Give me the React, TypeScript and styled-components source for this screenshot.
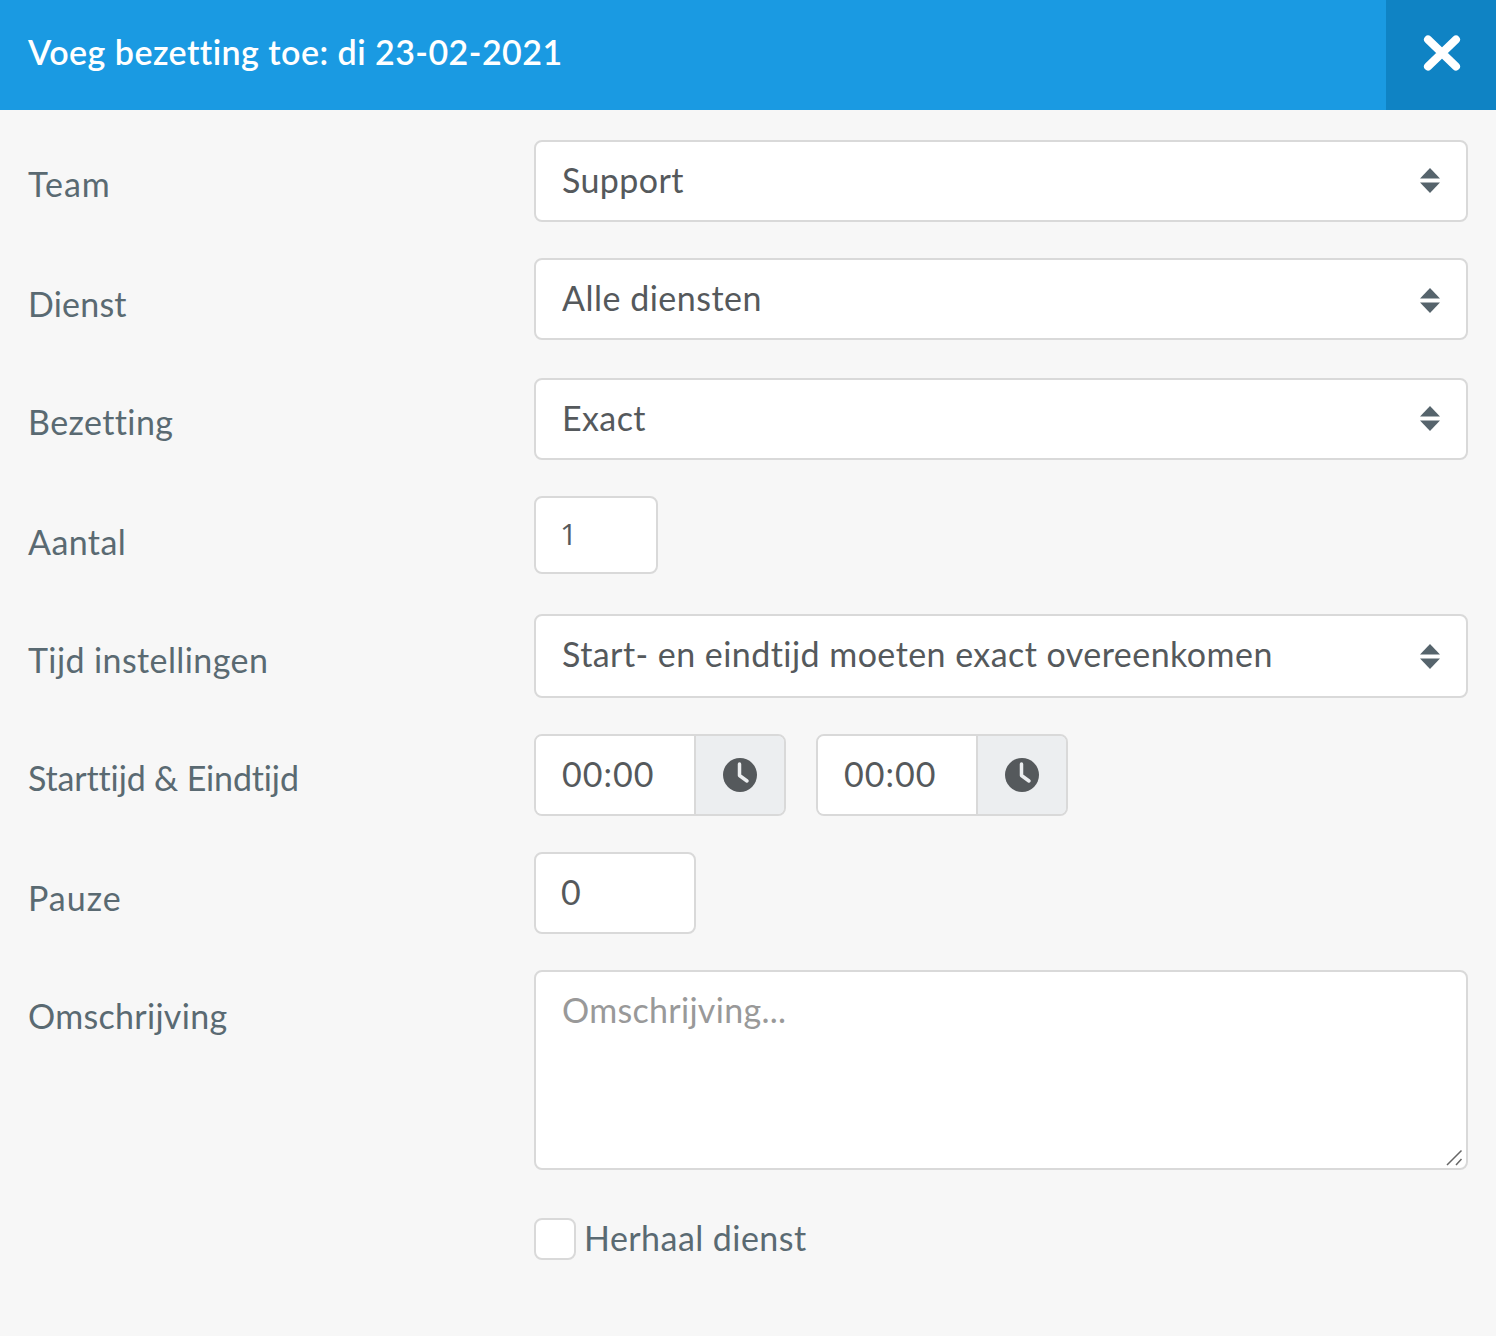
import React from "react";
import styled, { createGlobalStyle } from "styled-components";

const GlobalStyle = createGlobalStyle`
  * {
    box-sizing: border-box;
  }
  html, body {
    margin: 0;
    padding: 0;
    background: #f7f7f7;
    font-family: Lato, "Open Sans", sans-serif;
    font-variant-ligatures: none;
  }
  input, select, textarea {
    font-variant-ligatures: none;
  }
`;

const Field = ({ label, gap, offset, spacing = 0.4, children }: { label: string; gap: number; offset: number; spacing?: number; children: React.ReactNode }) => (
  <Row $gap={gap}>
    <Label $offset={offset} $spacing={spacing}>{label}</Label>
    <Control>{children}</Control>
  </Row>
);

const SelectBox = ({ value, height = 82, arrowTop = -13, spacing = 0.4 }: { value: string; height?: number; arrowTop?: number; spacing?: number }) => (
  <SelectWrap>
    <Select defaultValue={value} $height={height} $spacing={spacing}>
      <option>{value}</option>
    </Select>
    <Arrows $top={arrowTop} width="20" height="25" viewBox="0 0 20 25">
      <path d="M10 0 L20 10.5 L0 10.5 Z" fill="#56646c" />
      <path d="M0 14.5 L20 14.5 L10 25 Z" fill="#56646c" />
    </Arrows>
  </SelectWrap>
);

const TimeField = ({ value }: { value: string }) => (
  <TimeGroup>
    <TimeInput defaultValue={value} />
    <TimeAddon>
      <svg width="34" height="34" viewBox="0 0 34 34">
        <circle cx="17" cy="17" r="17" fill="#55595c" />
        <path d="M16.5 6 V17.5 L24 23" fill="none" stroke="#eceef0" strokeWidth="3.5" strokeLinecap="round" strokeLinejoin="round" />
      </svg>
    </TimeAddon>
  </TimeGroup>
);

export default function App() {
  return (
    <Modal>
      <GlobalStyle />
      <Header>
        <Title>Voeg bezetting toe: di 23-02-2021</Title>
        <CloseButton aria-label="Sluiten">
          <svg width="38" height="36" viewBox="0 0 38 36">
            <path d="M5 4.5 L33 31.5 M33 4.5 L5 31.5" fill="none" stroke="#fff" strokeWidth="8" strokeLinecap="round" />
          </svg>
        </CloseButton>
      </Header>
      <Form>
        <Field label="Team" gap={36} offset={23} spacing={1}>
          <SelectBox value="Support" />
        </Field>
        <Field label="Dienst" gap={38} offset={25} spacing={0.2}>
          <SelectBox value="Alle diensten" arrowTop={-11} spacing={0.5} />
        </Field>
        <Field label="Bezetting" gap={36} offset={23}>
          <SelectBox value="Exact" />
        </Field>
        <Field label="Aantal" gap={40} offset={25}>
          <CountInput defaultValue="1" $width={124} $height={78} $pad={26} />
        </Field>
        <Field label="Tijd instellingen" gap={36} offset={25}>
          <SelectBox value="Start- en eindtijd moeten exact overeenkomen" height={84} arrowTop={-12} spacing={0.45} />
        </Field>
        <Field label="Starttijd & Eindtijd" gap={36} offset={23} spacing={-0.15}>
          <TimeRow>
            <TimeField value="00:00" />
            <TimeField value="00:00" />
          </TimeRow>
        </Field>
        <Field label="Pauze" gap={36} offset={25} spacing={1}>
          <SmallInput defaultValue="0" $width={162} $height={82} $pad={27} />
        </Field>
        <Field label="Omschrijving" gap={48} offset={25} spacing={0.3}>
          <TextAreaWrap>
            <TextArea placeholder="Omschrijving..." />
            <Grip width="18" height="18" viewBox="0 0 18 18">
              <path d="M1 17 L15.5 2.5 M10 17 L15.5 11" fill="none" stroke="#666" strokeWidth="1.5" />
            </Grip>
          </TextAreaWrap>
        </Field>
        <Row $gap={0}>
          <Label $offset={0} $spacing={0.4} />
          <CheckLabel>
            <CheckBox type="checkbox" />
            <CheckText>Herhaal dienst</CheckText>
          </CheckLabel>
        </Row>
      </Form>
    </Modal>
  );
}

const Modal = styled.div`
  width: 1496px;
  height: 1336px;
  background: #f7f7f7;
  overflow: hidden;
`;

const Header = styled.header`
  display: flex;
  align-items: stretch;
  justify-content: space-between;
  height: 110px;
  background: #1a9ae2;
`;

const Title = styled.h1`
  margin: 0;
  padding: 0 0 8px 28px;
  align-self: center;
  font-size: 34px;
  font-weight: 600;
  letter-spacing: 0.46px;
  color: #fff;
`;

const CloseButton = styled.button`
  display: flex;
  align-items: center;
  justify-content: center;
  width: 110px;
  padding: 0 0 4px 1px;
  border: 0;
  background: #0f83c4;
`;

const Form = styled.form`
  display: flex;
  flex-direction: column;
  padding: 30px 28px 0 28px;
`;

const Row = styled.div<{ $gap: number }>`
  display: flex;
  align-items: flex-start;
  margin-bottom: ${(p) => p.$gap}px;
`;

const Label = styled.label<{ $offset: number; $spacing: number }>`
  flex: 0 0 506px;
  padding-top: ${(p) => p.$offset}px;
  font-size: 34px;
  line-height: 42px;
  letter-spacing: ${(p) => p.$spacing}px;
  color: #5a6a72;
`;

const Control = styled.div`
  flex: 1;
  min-width: 0;
`;

const SelectWrap = styled.div`
  position: relative;
`;

const Select = styled.select<{ $height: number; $spacing: number }>`
  display: block;
  width: 100%;
  height: ${(p) => p.$height}px;
  padding: 0 60px ${(p) => p.$height - 78}px 26px;
  appearance: none;
  border: 2px solid #d9d9d9;
  border-radius: 8px;
  background: #fff;
  font-family: inherit;
  font-size: 34px;
  letter-spacing: ${(p) => p.$spacing}px;
  color: #55595c;
`;

const Arrows = styled.svg<{ $top: number }>`
  position: absolute;
  top: 50%;
  right: 28px;
  margin-top: ${(p) => p.$top}px;
`;

const SmallInput = styled.input<{ $width: number; $height: number; $pad: number }>`
  display: block;
  width: ${(p) => p.$width}px;
  height: ${(p) => p.$height}px;
  padding: 0 0 4px ${(p) => p.$pad - 2}px;
  border: 2px solid #d9d9d9;
  border-radius: 8px;
  background: #fff;
  font-family: inherit;
  font-size: 34px;
  letter-spacing: 0.4px;
  color: #55595c;
`;

const CountInput = styled(SmallInput)`
  font-family: "Open Sans", sans-serif;
  font-size: 30px;
`;

const TimeRow = styled.div`
  display: flex;
  gap: 30px;
`;

const TimeGroup = styled.div`
  display: flex;
  width: 252px;
  height: 82px;
  border: 2px solid #d9d9d9;
  border-radius: 8px;
  overflow: hidden;
`;

const TimeInput = styled.input`
  flex: 0 0 158px;
  width: 158px;
  padding: 0 0 4px 26px;
  border: 0;
  background: #fff;
  font-family: inherit;
  font-size: 34px;
  letter-spacing: 1px;
  color: #55595c;
`;

const TimeAddon = styled.div`
  display: flex;
  flex: 1;
  align-items: center;
  justify-content: center;
  padding-right: 1px;
  border-left: 2px solid #d9d9d9;
  background: #eceef0;
`;

const TextAreaWrap = styled.div`
  position: relative;
`;

const TextArea = styled.textarea`
  display: block;
  width: 100%;
  height: 200px;
  padding: 17px 26px;
  resize: none;
  border: 2px solid #d9d9d9;
  border-radius: 8px;
  background: #fff;
  font-family: inherit;
  font-size: 34px;
  line-height: 42px;
  letter-spacing: 0.3px;
  color: #55595c;

  &::placeholder {
    color: #999;
    opacity: 1;
  }
`;

const Grip = styled.svg`
  position: absolute;
  right: 4px;
  bottom: 4px;
`;

const CheckLabel = styled.label`
  display: flex;
  align-items: flex-start;
  gap: 8px;
  font-size: 34px;
  line-height: 42px;
  letter-spacing: 0.45px;
  color: #5a6a72;
`;

const CheckText = styled.span`
  margin-top: -1px;
`;

const CheckBox = styled.input`
  width: 42px;
  height: 42px;
  margin: 0;
  appearance: none;
  border: 2px solid #d9d9d9;
  border-radius: 8px;
  background: #fff;
`;
